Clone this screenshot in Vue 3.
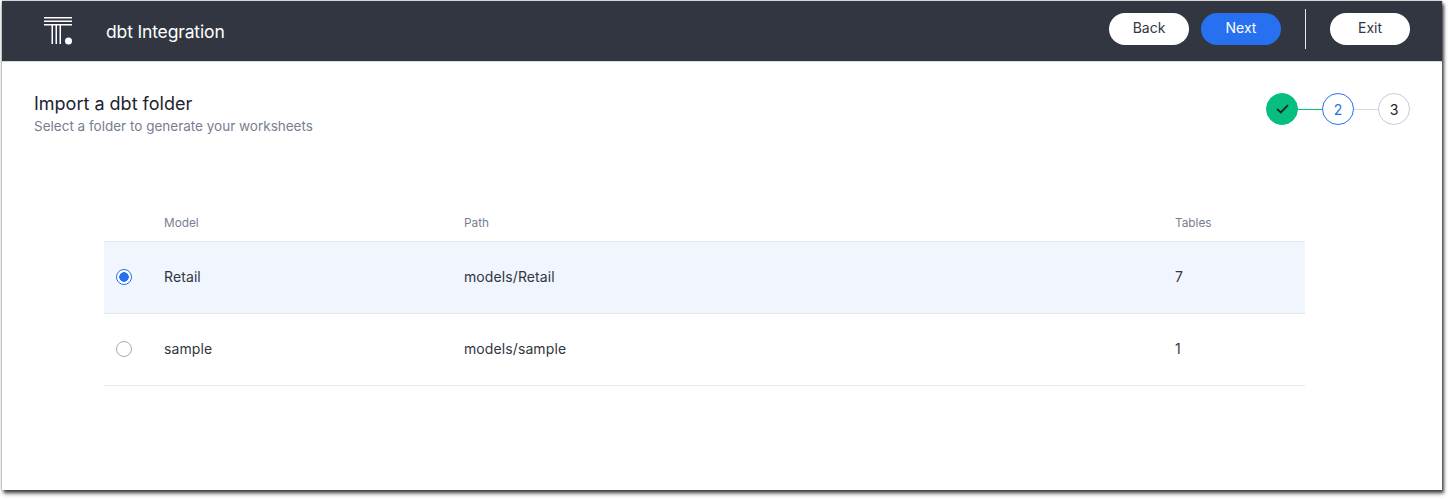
<script setup>
const rows = [
  { model: 'Retail', path: 'models/Retail', tables: 7, selected: true },
  { model: 'sample', path: 'models/sample', tables: 1, selected: false },
];
</script>

<template>
  <div class="page">
    <div class="window">
      <header class="topbar">
        <div class="brand">
          <svg class="logo" width="30" height="30" viewBox="0 0 30 30" fill="#fff">
            <rect x="1" y="1" width="28" height="1.5" />
            <rect x="1" y="4.5" width="28" height="1.5" />
            <rect x="1" y="8" width="28" height="1.5" />
            <rect x="8.5" y="9" width="1.5" height="19" />
            <rect x="12.5" y="9" width="1.5" height="19" />
            <rect x="16.5" y="9" width="1.5" height="19" />
            <circle cx="25.5" cy="25" r="3.5" />
          </svg>
          <span class="product">dbt Integration</span>
        </div>
        <div class="actions">
          <button class="btn">Back</button>
          <button class="btn primary">Next</button>
          <span class="divider"></span>
          <button class="btn">Exit</button>
        </div>
      </header>

      <main class="content">
        <div class="head">
          <div>
            <h1>Import a dbt folder</h1>
            <p>Select a folder to generate your worksheets</p>
          </div>
          <div class="stepper">
            <span class="step done">
              <svg width="13" height="10" viewBox="0 0 13 10" fill="none" stroke="#1d232f" stroke-width="1.8">
                <path d="M1 5 4.8 8.4 12 1.2" />
              </svg>
            </span>
            <span class="link green"></span>
            <span class="step current">2</span>
            <span class="link"></span>
            <span class="step">3</span>
          </div>
        </div>

        <div class="table">
          <div class="row header">
            <span></span>
            <span>Model</span>
            <span>Path</span>
            <span>Tables</span>
          </div>
          <div v-for="row in rows" :key="row.model" class="row item" :class="{ selected: row.selected }">
            <span class="radio-cell"><span class="radio" :class="{ on: row.selected }"></span></span>
            <span class="cell">{{ row.model }}</span>
            <span class="cell">{{ row.path }}</span>
            <span class="cell">{{ row.tables }}</span>
          </div>
        </div>
      </main>
    </div>
  </div>
</template>

<style>
html, body {
  background: #fff;
  overflow: hidden;
}
</style>

<style scoped>
.page {
  box-sizing: border-box;
  height: 499px;
  padding: 1px 0 0 2px;
}

.window {
  box-sizing: border-box;
  width: 1440px;
  height: 489px;
  background: #fff;
  font-family: Inter, "Liberation Sans", sans-serif;
  color: #1d232f;
  box-shadow: 2px 3px 3px rgba(0, 0, 0, 0.6), 1px 4px 5px rgba(0, 0, 0, 0.25), 0 0 2px rgba(0, 0, 0, 0.45);
  overflow: hidden;
}

.topbar {
  height: 60px;
  background: #323641;
  border-bottom: 1px solid #d5d9e2;
  display: flex;
  align-items: center;
  justify-content: space-between;
  padding: 0 32px 0 41px;
}

.brand {
  display: flex;
  align-items: center;
}

.logo {
  display: block;
  margin-top: -1px;
}

.product {
  margin-left: 33px;
  padding-top: 1px;
  color: #fff;
  font-size: 17.5px;
  letter-spacing: -0.15px;
}

.actions {
  display: flex;
  align-items: center;
  gap: 12px;
  padding-bottom: 4px;
}

.btn {
  width: 80px;
  height: 32px;
  padding: 0 0 3px;
  border: 0;
  border-radius: 16px;
  background: #fff;
  color: #323641;
  font: inherit;
  font-size: 14px;
}

.btn.primary {
  background: #2770ef;
  color: #fff;
}

.divider {
  width: 1px;
  height: 40px;
  margin: 0 12px;
  background: #e6e8ee;
}

.content {
  padding: 31px 32px 0;
}

.head {
  display: flex;
  justify-content: space-between;
  align-items: flex-start;
}

h1 {
  margin: 0;
  font-size: 18px;
  font-weight: 400;
  line-height: 22px;
}

.head p {
  margin: 2px 0 0;
  font-size: 13.5px;
  line-height: 18px;
  color: #777e8f;
}

.stepper {
  display: flex;
  align-items: center;
}

.step {
  box-sizing: border-box;
  width: 32px;
  height: 32px;
  border: 1px solid #c8ccd6;
  border-radius: 50%;
  display: flex;
  align-items: center;
  justify-content: center;
  font-size: 14px;
}

.step.done {
  background: #06bf7f;
  border-color: #06bf7f;
}

.step.current {
  border-color: #2770ef;
  color: #2770ef;
}

.link {
  width: 24px;
  height: 1px;
  background: #d5d9e2;
}

.link.green {
  background: #06bf7f;
}

.table {
  margin: 71px 105px 0 70px;
  width: 1201px;
  font-size: 14px;
}

.row {
  display: grid;
  grid-template-columns: 60px 300px 711px 130px;
  align-items: center;
}

.row.header {
  height: 36px;
  align-items: start;
  padding-top: 8px;
  box-sizing: border-box;
  font-size: 11.8px;
  line-height: 18px;
  color: #777e8f;
  border-bottom: 1px solid #e6e8ee;
}

.row.item {
  height: 72px;
  padding-bottom: 1px;
  box-sizing: border-box;
  border-bottom: 1px solid #e6e8ee;
  color: #323641;
}

.row.item.selected {
  background: #f0f5fe;
}

.cell {
  padding-bottom: 2px;
  letter-spacing: 0.1px;
}

.radio-cell {
  display: flex;
  padding-left: 12px;
}

.radio {
  box-sizing: border-box;
  width: 16px;
  height: 16px;
  border: 1px solid #a6acba;
  border-radius: 50%;
  background: #fff;
}

.radio.on {
  border-color: #2770ef;
  background: radial-gradient(circle, #2770ef 0 4.5px, #fff 5px);
}
</style>
